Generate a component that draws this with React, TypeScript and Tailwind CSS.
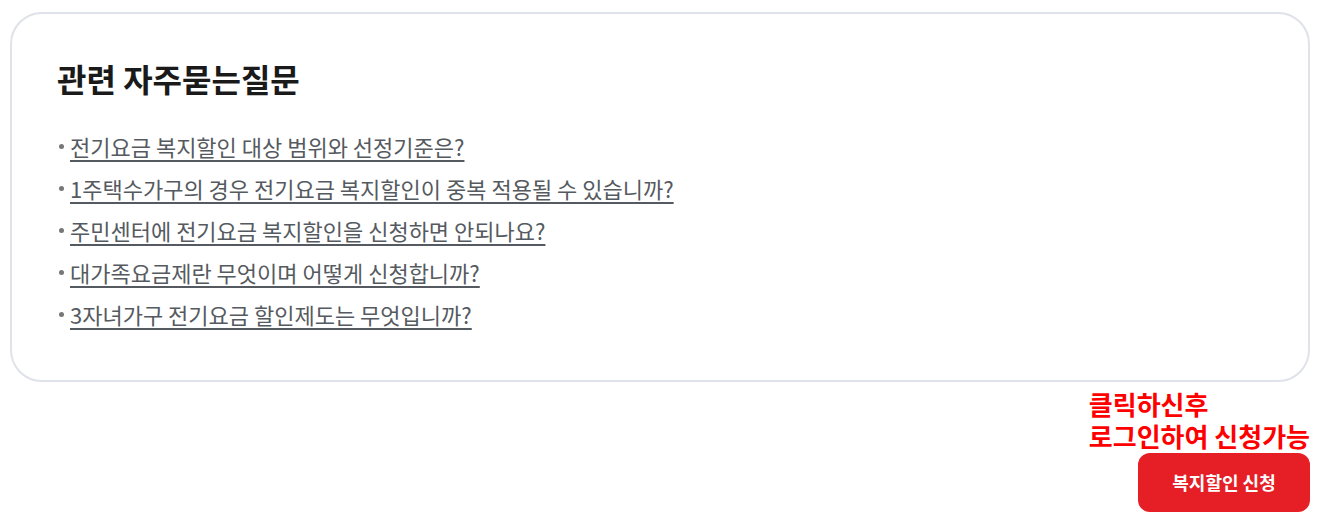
export default function App() {
  const questions = [
    "전기요금 복지할인 대상 범위와 선정기준은?",
    "1주택수가구의 경우 전기요금 복지할인이 중복 적용될 수 있습니까?",
    "주민센터에 전기요금 복지할인을 신청하면 안되나요?",
    "대가족요금제란 무엇이며 어떻게 신청합니까?",
    "3자녀가구 전기요금 할인제도는 무엇입니까?",
  ];

  return (
    <main
      className="min-h-screen bg-white pl-[10px] pr-[20px] pt-[12px]"
      style={{ fontFamily: '"Noto Sans CJK KR", "Noto Sans", sans-serif' }}
    >
      <section className="w-[1300px] rounded-[32px] border-2 border-[#dfe2e8] px-[45px] pb-[45px] pt-[44px]">
        <h2 className="text-[32px] font-bold leading-[40px] text-[#1a1a1a]">관련 자주묻는질문</h2>

        <ul className="mt-[27px]">
          {questions.map((q) => (
            <li key={q} className="flex items-center text-[22px] leading-[42px] text-[#555a60]">
              <span className="mr-[6px] ml-[2px] inline-block h-[5px] w-[5px] rounded-full bg-[#777]" />
              <a href="#" className="underline decoration-[#555a60] underline-offset-[4px] decoration-[2px]">
                {q}
              </a>
            </li>
          ))}
        </ul>
      </section>

      <div className="flex w-[1300px] justify-end pt-[6px]">
        <div className="flex flex-col items-end">
          <p className="self-start text-[26px] font-bold leading-[32px] text-[#ff0000]">
            클릭하신후
            <br />
            로그인하여 신청가능
          </p>
          <button
            type="button"
            className="mt-[1px] h-[59px] w-[172px] rounded-[12px] bg-[#e61e25] text-[18px] font-bold text-white"
          >
            복지할인 신청
          </button>
        </div>
      </div>
    </main>
  );
}
